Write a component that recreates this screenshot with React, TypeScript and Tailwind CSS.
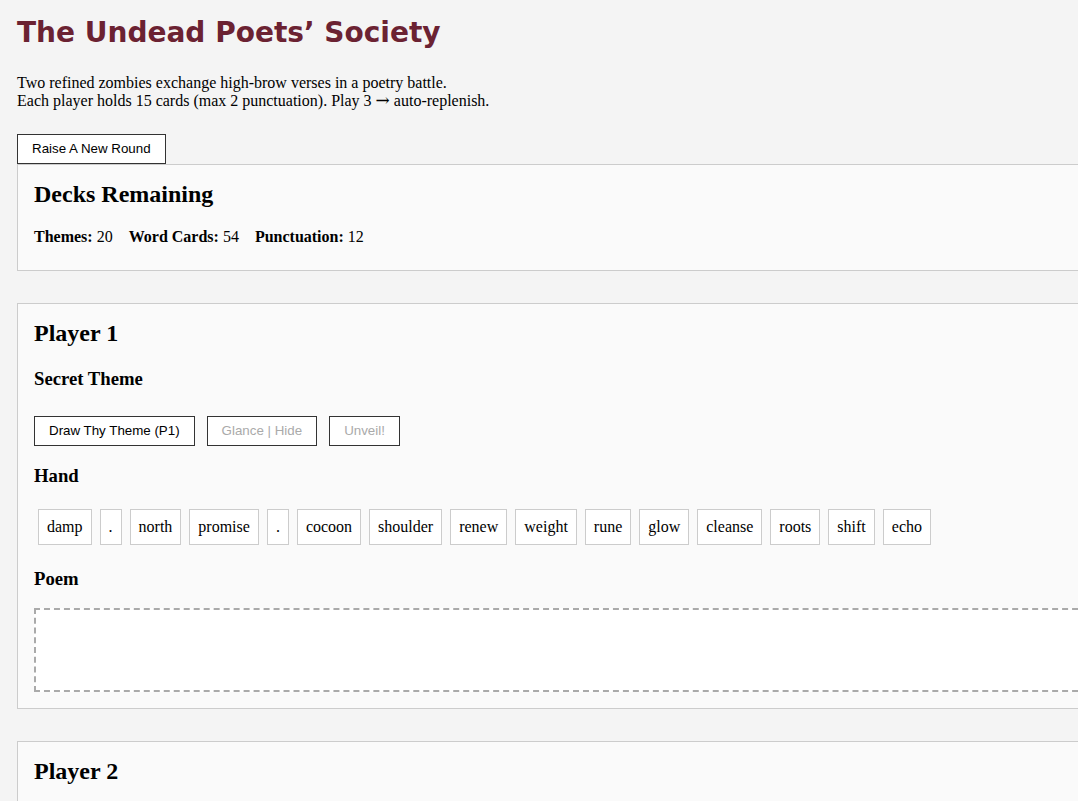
import React from "react";

const hand = ["damp", ".", "north", "promise", ".", "cocoon", "shoulder", "renew", "weight", "rune", "glow", "cleanse", "roots", "shift", "echo"];

function Btn({ label, disabled }: { label: string; disabled?: boolean }) {
  return (
    <button
      className={
        "h-[30px] px-[14px] border border-[#333] bg-white text-[13.33px] font-['Liberation_Sans',Arial,sans-serif] " +
        (disabled ? "text-[#aaa]" : "text-black")
      }
    >
      {label}
    </button>
  );
}

function PlayerPanel({ n, cards }: { n: number; cards: string[] }) {
  return (
    <div className="w-[1078px] mt-[32px] border border-[#ccc] bg-[#fafafa] pt-[15px] px-[16px] pb-[16px]">
      <h2 className="text-[24px] leading-[28px] font-bold">Player {n}</h2>
      <h3 className="mt-[21px] text-[18.72px] leading-[22px] font-bold">Secret Theme</h3>
      <div className="mt-[26px] flex gap-[12px]">
        <Btn label={`Draw Thy Theme (P${n})`} />
        <Btn label="Glance | Hide" disabled />
        <Btn label="Unveil!" disabled />
      </div>
      <h3 className="mt-[19px] text-[18.72px] leading-[22px] font-bold">Hand</h3>
      <div className="mt-[18px] flex flex-wrap">
        {cards.map((c, i) => (
          <span key={i} className="m-[4px] border border-[#ccc] bg-white px-[8px] py-[8px] leading-[18px] text-[16px]">
            {c}
          </span>
        ))}
      </div>
      <h3 className="mt-[19px] text-[18.72px] leading-[22px] font-bold">Poem</h3>
      <div className="mt-[18px] h-[84px] w-[calc(100%+40px)] border-2 border-dashed border-[#aaa] bg-white"></div>
    </div>
  );
}

export default function App() {
  return (
    <div className="min-h-screen overflow-hidden bg-[#f4f4f4] px-[17px] pb-[40px] text-black font-['Liberation_Serif','Times_New_Roman',serif] text-[16px]">
      <h1 className="pt-[13px] text-[28px] leading-[40px] font-bold text-[#6b2232] font-['Comic_Sans_MS','DejaVu_Sans',sans-serif]">
        The Undead Poets’ Society
      </h1>
      <p className="mt-[21px] h-[36px] leading-[18px]">
        Two refined zombies exchange high-brow verses in a poetry battle.
        <br />
        Each player holds 15 cards (max 2 punctuation). Play 3{" "}
        <span className="font-['DejaVu_Serif',serif] text-[17px] leading-none">→</span> auto-replenish.
      </p>
      <div className="mt-[24px]">
        <Btn label="Raise A New Round" />
      </div>
      <div className="w-[1078px] border border-[#ccc] bg-[#fafafa] pt-[15px] px-[16px] pb-[24px]">
        <h2 className="text-[24px] leading-[28px] font-bold">Decks Remaining</h2>
        <div className="mt-[20px] flex gap-[16px] leading-[18px]">
          <span><b>Themes:</b> 20</span>
          <span><b>Word Cards:</b> 54</span>
          <span><b>Punctuation:</b> 12</span>
        </div>
      </div>
      <PlayerPanel n={1} cards={hand} />
      <PlayerPanel n={2} cards={hand} />
    </div>
  );
}
